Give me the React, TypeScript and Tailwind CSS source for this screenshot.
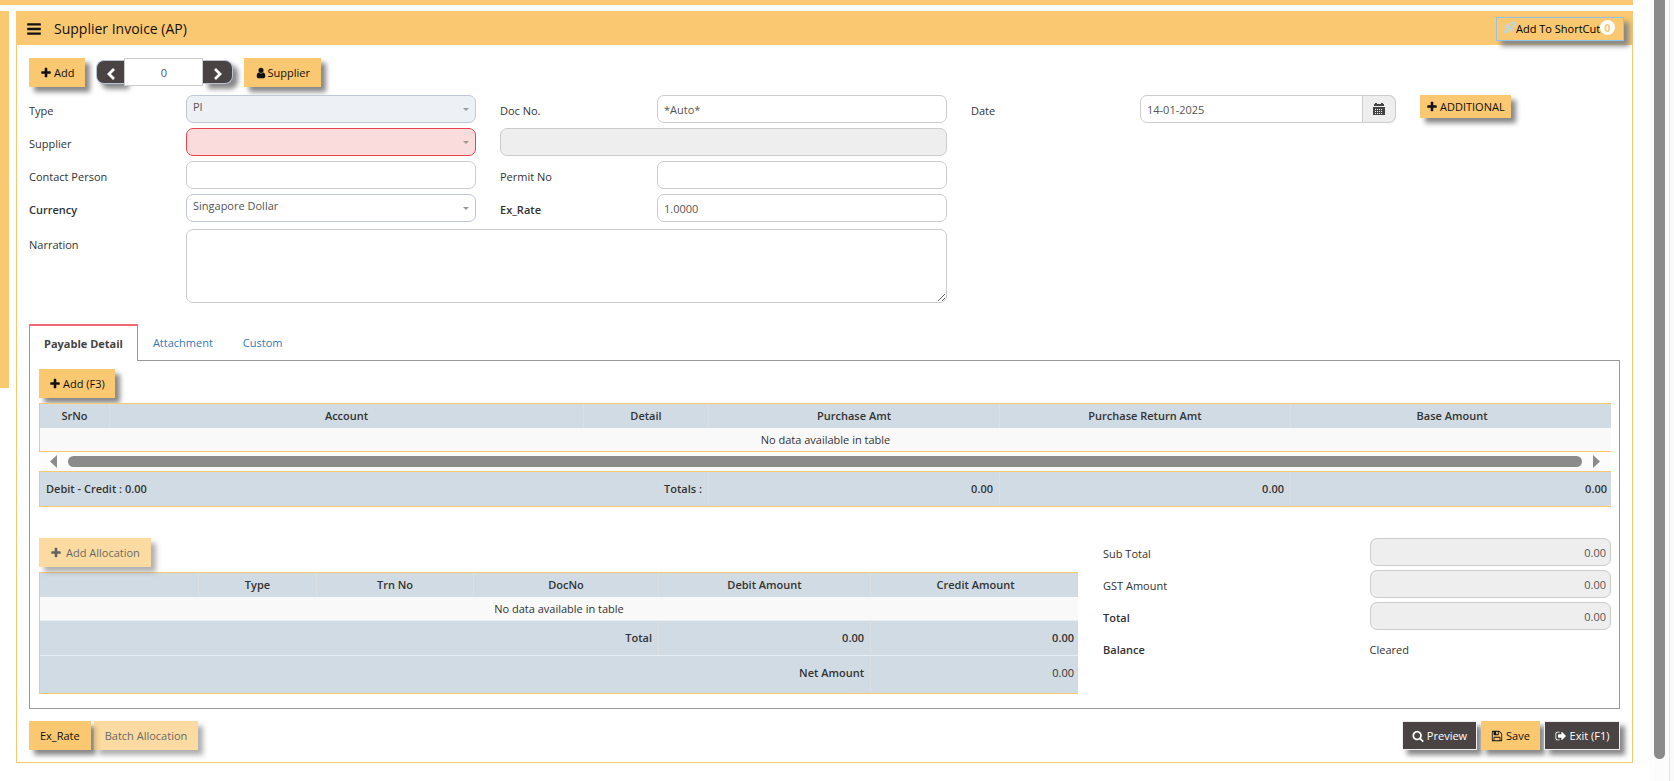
import { useState } from 'react';
import type { ReactNode } from 'react';
import clsx from 'clsx';
import { Rocket } from 'lucide-react';

const icons = {
  bars: 'M1664 1344v128q0 26-19 45t-45 19h-1408q-26 0-45-19t-19-45v-128q0-26 19-45t45-19h1408q26 0 45 19t19 45zm0-512v128q0 26-19 45t-45 19h-1408q-26 0-45-19t-19-45v-128q0-26 19-45t45-19h1408q26 0 45 19t19 45zm0-512v128q0 26-19 45t-45 19h-1408q-26 0-45-19t-19-45v-128q0-26 19-45t45-19h1408q26 0 45 19t19 45z',
  plus: 'M1600 736v192q0 40-28 68t-68 28h-416v416q0 40-28 68t-68 28h-192q-40 0-68-28t-28-68v-416h-416q-40 0-68-28t-28-68v-192q0-40 28-68t68-28h416v-416q0-40 28-68t68-28h192q40 0 68 28t28 68v416h416q40 0 68 28t28 68z',
  user: 'M1536 1399q0 109-62.5 187t-150.5 78h-854q-88 0-150.5-78t-62.5-187q0-85 8.5-160.5t31.5-152 58.5-131 94-89 134.5-34.5q131 128 313 128t313-128q76 0 134.5 34.5t94 89 58.5 131 31.5 152 8.5 160.5zm-256-887q0 159-112.5 271.5t-271.5 112.5-271.5-112.5-112.5-271.5 112.5-271.5 271.5-112.5 271.5 112.5 112.5 271.5z',
  search:
    'M1216 832q0-185-131.5-316.5t-316.5-131.5-316.5 131.5-131.5 316.5 131.5 316.5 316.5 131.5 316.5-131.5 131.5-316.5zm512 832q0 52-38 90t-90 38q-54 0-90-38l-343-342q-179 124-399 124-143 0-273.5-55.5t-225-150-150-225-55.5-273.5 55.5-273.5 150-225 225-150 273.5-55.5 273.5 55.5 225 150 150 225 55.5 273.5q0 220-124 399l343 343q37 37 37 90z',
  save: 'M512 1536h768v-384h-768v384zm896 0h128v-896q0-14-10-38.5t-20-34.5l-281-281q-10-10-34-20t-39-10v416q0 40-28 68t-68 28h-576q-40 0-68-28t-28-68v-416h-128v1280h128v-416q0-40 28-68t68-28h832q40 0 68 28t28 68v416zm-384-928v-320q0-13-9.5-22.5t-22.5-9.5h-192q-13 0-22.5 9.5t-9.5 22.5v320q0 13 9.5 22.5t22.5 9.5h192q13 0 22.5-9.5t9.5-22.5zm640 32v928q0 40-28 68t-68 28h-1344q-40 0-68-28t-28-68v-1344q0-40 28-68t68-28h928q40 0 88 20t76 48l280 280q28 28 48 76t20 88z',
  exit: 'M704 1440q0 4 1 20t.5 26.5-3 23.5-10 19.5-20.5 6.5h-320q-119 0-203.5-84.5t-84.5-203.5v-704q0-119 84.5-203.5t203.5-84.5h320q13 0 22.5 9.5t9.5 22.5q0 4 1 20t.5 26.5-3 23.5-10 19.5-20.5 6.5h-320q-66 0-113 47t-47 113v704q0 66 47 113t113 47h312l11.5 1 11.5 3 8 5.5 7 9 2 13.5zm928-544q0 26-19 45l-544 544q-19 19-45 19t-45-19-19-45v-288h-448q-26 0-45-19t-19-45v-384q0-26 19-45t45-19h448v-288q0-26 19-45t45-19 45 19l544 544q19 19 19 45z',
};

function Icon({ name, className = 'size-3' }: { name: keyof typeof icons; className?: string }) {
  return (
    <svg viewBox="0 0 1792 1792" fill="currentColor" className={clsx('shrink-0', className)} aria-hidden="true">
      <path d={icons[name]} />
    </svg>
  );
}

const shadow = 'shadow-[5px_5px_5px_#888]';

type ButtonProps = { children: ReactNode; dark?: boolean; disabled?: boolean; className?: string };

function Button({ children, dark, disabled, className = 'px-[11px]' }: ButtonProps) {
  return (
    <button
      type="button"
      disabled={disabled}
      className={clsx(
        'flex h-[29px] items-center justify-center whitespace-nowrap disabled:opacity-65',
        shadow,
        dark ? 'border border-[#eee] bg-[#4a4343] text-white' : 'bg-[#f9c870] text-[#111]',
        className
      )}
    >
      {children}
    </button>
  );
}

function Label({ children, htmlFor, bold }: { children: ReactNode; htmlFor?: string; bold?: boolean }) {
  return (
    <label htmlFor={htmlFor} className={clsx('h-7 pt-1 leading-6', bold && 'font-semibold')}>
      {children}
    </label>
  );
}

const field = 'h-7 w-full min-w-0 rounded-[7px] border border-[#ccc] bg-white px-1.5 text-[#555] outline-none';

function Select({ id, value, className = 'border-[#c0c8d8] bg-white' }: { id: string; value: string; className?: string }) {
  return (
    <div className="relative">
      <select
        id={id}
        defaultValue={value}
        className={clsx('h-7 w-full appearance-none rounded-[7px] border px-1.5 pb-1 text-[#555] outline-none', className)}
      >
        <option>{value}</option>
      </select>
      <svg viewBox="0 0 6 3" className="absolute top-[13px] right-[7px] h-[3px] w-1.5" fill="#999" aria-hidden="true">
        <path d="M0 0h6L3 3z" />
      </svg>
    </div>
  );
}

const cell = 'border-r border-[#dadfe3] px-1.5 last:border-r-0 last:pr-1';
const footCell = 'border-t border-t-[#e6edf3] text-right';

const payableCols = ['w-[70px]', '', 'w-[125px]', 'w-[291px]', 'w-[291px]', 'w-[320px]'];
const allocationCols = ['', 'w-[118px]', 'w-[157px]', 'w-[185px]', 'w-[212px]', 'w-[207px]'];

function Cols({ widths }: { widths: string[] }) {
  return (
    <colgroup>
      {widths.map((w, i) => (
        <col key={i} className={w} />
      ))}
    </colgroup>
  );
}

function TableHead({ titles }: { titles: string[] }) {
  return (
    <thead className="bg-[#d1dbe4]">
      <tr className="h-6">
        {titles.map((t, i) => (
          <th key={i} className={clsx(cell, 'text-center font-semibold')}>
            {t}
          </th>
        ))}
      </tr>
    </thead>
  );
}

function EmptyRow() {
  return (
    <tbody>
      <tr className="h-[23px] bg-[#f9f9f9]">
        <td colSpan={6} className="text-center">
          No data available in table
        </td>
      </tr>
    </tbody>
  );
}

export default function App() {
  const [tab, setTab] = useState('Payable Detail');

  return (
    <div className="flex min-h-screen bg-white font-['Open_Sans','Noto_Sans',sans-serif] text-[11px] leading-4 text-[#333]">
      <div className="min-w-0 flex-1">
        <div className="mr-[17px] h-[5px] bg-[#f9c870]" />

        <div className="mt-1.5 mr-[17px] flex items-start gap-[7px]">
          <aside className="h-[377px] w-[9px] shrink-0 bg-[#f9c870]" />

          <main className="min-w-0 flex-1 border border-t-0 border-[#f9c870]">
            <header className="flex h-[34px] items-center bg-[#f9c870] pt-0.5 pr-2 pl-[9px] text-[#111]">
              <button type="button" aria-label="Menu">
                <Icon name="bars" className="size-4" />
              </button>
              <h1 className="ml-3 flex-1 text-sm">Supplier Invoice (AP)</h1>
              <button
                type="button"
                className={clsx('relative flex h-6 w-32 items-center border border-[#8fc4ea] pl-1.5 text-black', shadow)}
              >
                <Rocket className="mb-1 size-[13px] shrink-0 text-[#b4d9f3]" strokeWidth={2.5} />
                <span className="whitespace-nowrap">Add To ShortCut</span>
                <span className="absolute top-0.5 right-2 size-[15px] rounded-full bg-white text-center leading-[15px] font-bold text-[#f9c870]">
                  0
                </span>
              </button>
            </header>

            <div className="px-3 pt-[13px] pb-3">
              <div className="flex h-[29px]">
                <Button>
                  <Icon name="plus" />
                  <span className="ml-0.5">Add</span>
                </Button>
                <div className="ml-[11px] flex">
                  <button
                    type="button"
                    aria-label="Previous"
                    className={clsx('mt-0.5 flex h-6 w-7 items-center justify-center rounded-l-lg border border-r-0 border-[#b9c3d3] bg-[#4a4343]', shadow)}
                  >
                    <svg viewBox="0 0 8 12" className="mt-1 h-3 w-2" fill="none" stroke="#fff" strokeWidth="2.8">
                      <path d="M7 1L2 6l5 5" />
                    </svg>
                  </button>
                  <input
                    aria-label="Record number"
                    defaultValue="0"
                    className="relative h-7 w-[79px] border border-[#ccc] bg-white text-center text-[#555] outline-none"
                  />
                  <button
                    type="button"
                    aria-label="Next"
                    className={clsx('mt-0.5 flex h-6 w-[30px] items-center justify-center rounded-r-lg border border-l-0 border-[#b9c3d3] bg-[#4a4343]', shadow)}
                  >
                    <svg viewBox="0 0 8 12" className="mt-1 h-3 w-2" fill="none" stroke="#fff" strokeWidth="2.8">
                      <path d="M1 1l5 5-5 5" />
                    </svg>
                  </button>
                </div>
                <div className="ml-[11px]">
                  <Button>
                    <Icon name="user" />
                    Supplier
                  </Button>
                </div>
              </div>

              <form className="mt-2 grid grid-cols-[133fr_290fr_133fr_290fr_145fr_256fr_200fr] gap-x-6 gap-y-[5px]">
                <Label htmlFor="type">Type</Label>
                <Select id="type" value="PI" className="border-[#c0c8d8] bg-[#edf0f5]" />
                <Label htmlFor="docNo">Doc No.</Label>
                <input id="docNo" defaultValue="*Auto*" className={field} />
                <Label htmlFor="date">Date</Label>
                <div className="flex">
                  <input
                    id="date"
                    defaultValue="14-01-2025"
                    className="h-7 min-w-0 flex-1 rounded-l-[7px] border border-[#ccc] bg-white px-1.5 text-[#555] outline-none"
                  />
                  <button
                    type="button"
                    aria-label="Pick a date"
                    className="flex h-7 w-[33px] items-center justify-center rounded-r-[7px] border border-l-0 border-[#ccc] bg-[#eee]"
                  >
                    <svg viewBox="0 0 12 12" className="size-3">
                      <path fill="#444" d="M1 1h1V0h2v1h4V0h2v1h1v2H1zM0 4h12v8H0z" />
                      <path stroke="#eee" strokeDasharray="1 1" d="M2 6.5h8M2 8.5h8M2 10.5h8" />
                    </svg>
                  </button>
                </div>
                <div>
                  <button
                    type="button"
                    className={clsx('flex h-[23px] items-center bg-[#f9c870] px-1.5 whitespace-nowrap text-[#111]', shadow)}
                  >
                    <Icon name="plus" />
                    <span className="ml-0.5">ADDITIONAL</span>
                  </button>
                </div>

                <Label htmlFor="supplier">Supplier</Label>
                <Select id="supplier" value="" className="border-[#e8414f] bg-[#fbdcdd]" />
                <input aria-label="Supplier name" disabled className={clsx(field, 'col-span-2 bg-[#eee]!')} />

                <div className="col-start-1 flex">
                  <Label htmlFor="contact">Contact Person</Label>
                </div>
                <input id="contact" className={field} />
                <Label htmlFor="permit">Permit No</Label>
                <input id="permit" className={field} />

                <div className="col-start-1 flex">
                  <Label htmlFor="currency" bold>
                    Currency
                  </Label>
                </div>
                <Select id="currency" value="Singapore Dollar" />
                <Label htmlFor="exRate" bold>
                  Ex_Rate
                </Label>
                <input id="exRate" defaultValue="1.0000" className={field} />

                <label htmlFor="narration" className="col-start-1 pt-[10px]">
                  Narration
                </label>
                <textarea
                  id="narration"
                  className="col-span-3 mt-0.5 h-[74px] rounded-[7px] border border-[#ccc] px-1.5 py-1 text-[#555] outline-none"
                />
              </form>

              <div role="tablist" className="mt-[21px] flex h-9">
                {['Payable Detail', 'Attachment', 'Custom'].map((name) => (
                  <button
                    key={name}
                    type="button"
                    role="tab"
                    aria-selected={tab === name}
                    onClick={() => setTab(name)}
                    className={clsx(
                      tab === name
                        ? 'relative h-[37px] border-x border-t-2 border-x-[#999] border-t-[#ee6b74] bg-white px-[14px] font-bold text-[#444]'
                        : 'h-[37px] px-[15px]  text-[#337ab7]'
                    )}
                  >
                    {name}
                  </button>
                ))}
              </div>

              <section className="border border-[#999] pt-2 pr-2 pb-[14px] pl-[9px]">
                <div className="flex">
                  <Button className="px-[10px]">
                    <Icon name="plus" />
                    <span className="ml-0.5">Add (F3)</span>
                  </Button>
                </div>

                <table className="relative mt-[5px] w-full table-fixed border-separate border-spacing-0 border border-r-0 border-[#f9c870]">
                  <Cols widths={payableCols} />
                  <TableHead titles={['SrNo', 'Account', 'Detail', 'Purchase Amt', 'Purchase Return Amt', 'Base Amount']} />
                  <EmptyRow />
                </table>

                <div className="flex h-[19px] items-center bg-[#fcfcfc] px-[11px]">
                  <svg viewBox="0 0 7 13" className="h-[13px] w-[7px]" fill="#8b8b8b">
                    <path d="M7 0v13L0 6.5z" />
                  </svg>
                  <div className="mx-[11px] h-[11px] flex-1 rounded-full bg-[#8b8b8b]" />
                  <svg viewBox="0 0 7 13" className="h-[13px] w-[7px]" fill="#8b8b8b">
                    <path d="M0 0v13l7-6.5z" />
                  </svg>
                </div>

                <table className="w-full table-fixed border-separate border-spacing-0 border border-r-0 border-[#f9c870] bg-[#d1dbe4] font-semibold">
                  <Cols widths={payableCols} />
                  <tbody>
                    <tr className="h-[34px]">
                      <td colSpan={2} className="px-1.5">
                        Debit - Credit : 0.00
                      </td>
                      <td className={clsx(cell, 'text-right')}>Totals :</td>
                      <td className={clsx(cell, 'text-right')}>0.00</td>
                      <td className={clsx(cell, 'text-right')}>0.00</td>
                      <td className={clsx(cell, 'text-right')}>0.00</td>
                    </tr>
                  </tbody>
                </table>

                <div className="mt-[31px] flex gap-[25px]">
                  <div className="min-w-0 flex-[1039]">
                    <div className="flex">
                      <Button disabled>
                        <Icon name="plus" />
                        <span className="ml-1">Add Allocation</span>
                      </Button>
                    </div>
                    <table className="mt-[5px] w-full table-fixed border-separate border-spacing-0 border border-r-0 border-[#f9c870]">
                      <Cols widths={allocationCols} />
                      <TableHead titles={['', 'Type', 'Trn No', 'DocNo', 'Debit Amount', 'Credit Amount']} />
                      <EmptyRow />
                      <tfoot className="bg-[#d1dbe4]">
                        <tr className="h-[35px] font-semibold">
                          <td colSpan={4} className={clsx(cell, footCell)}>
                            Total
                          </td>
                          <td className={clsx(cell, footCell)}>0.00</td>
                          <td className={clsx(cell, footCell)}>0.00</td>
                        </tr>
                        <tr className="h-[38px]">
                          <td colSpan={5} className={clsx(cell, footCell, 'pb-1 font-semibold')}>
                            Net Amount
                          </td>
                          <td className={clsx(cell, footCell, 'pb-1')}>0.00</td>
                        </tr>
                      </tfoot>
                    </table>
                  </div>

                  <div className="grid flex-[508] auto-rows-[28px] grid-cols-[266fr_241fr] gap-y-1">
                    <Label htmlFor="subTotal">Sub Total</Label>
                    <input id="subTotal" readOnly value="0.00" className={clsx(field, 'bg-[#eee]! px-1! text-right')} />
                    <Label htmlFor="gst">GST Amount</Label>
                    <input id="gst" readOnly value="0.00" className={clsx(field, 'bg-[#eee]! px-1! text-right')} />
                    <Label htmlFor="total" bold>
                      Total
                    </Label>
                    <input id="total" readOnly value="0.00" className={clsx(field, 'bg-[#eee]! px-1! text-right')} />
                    <Label bold>Balance</Label>
                    <span className="pt-1 leading-6">Cleared</span>
                  </div>
                </div>
              </section>

              <footer className="mt-3 flex gap-[3px]">
                <Button>Ex_Rate</Button>
                <Button disabled>Batch Allocation</Button>
                <div className="ml-auto flex gap-1">
                  <Button dark className="w-[75px] gap-[3px]">
                    <Icon name="search" />
                    Preview
                  </Button>
                  <Button className="w-[59px] gap-[3px]">
                    <Icon name="save" />
                    Save
                  </Button>
                  <Button dark className="w-[76px] gap-[3px]">
                    <Icon name="exit" />
                    Exit (F1)
                  </Button>
                </div>
              </footer>
            </div>
          </main>
        </div>
      </div>

      <div className="w-[19px] shrink-0 bg-[#fcfcfc] px-1 pb-[22px]">
        <div className="h-full rounded-b-full bg-[#8b8b8b]" />
      </div>
      <div className="w-[5px] shrink-0 border-l border-[#e3e3e3] bg-[#fafafa]" />
    </div>
  );
}
